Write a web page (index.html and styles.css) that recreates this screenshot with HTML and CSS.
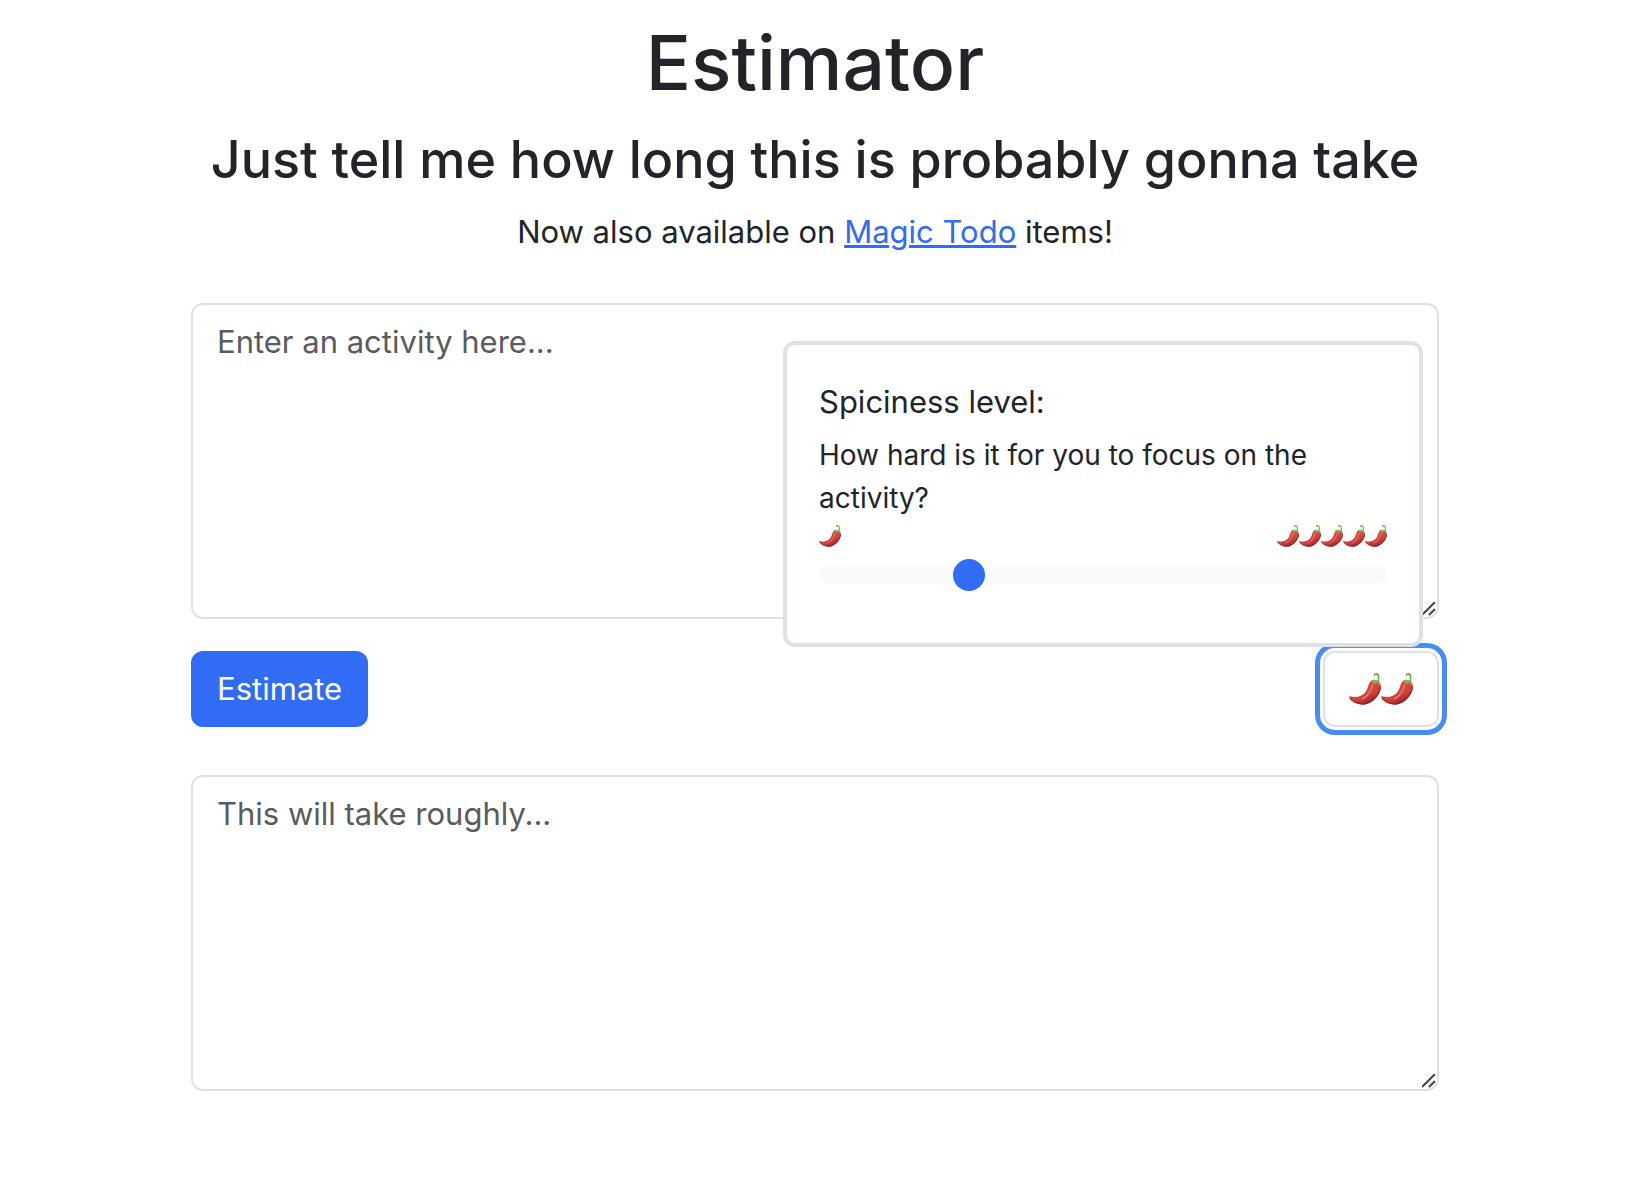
FILE: index.html
```html
<!DOCTYPE html>
<html lang="en">
<head>
<meta charset="utf-8">
<meta name="viewport" content="width=device-width, initial-scale=1">
<title>Estimator</title>
<link rel="stylesheet" href="styles.css">
</head>
<body>
<svg class="defs" width="0" height="0" aria-hidden="true">
  <defs>
    <linearGradient id="skin" x1="0.3" y1="0.2" x2="0.75" y2="1">
      <stop offset="0" stop-color="#e0504a"/>
      <stop offset="0.55" stop-color="#cf3f3b"/>
      <stop offset="1" stop-color="#8a1f1f"/>
    </linearGradient>
    <symbol id="chili" viewBox="0 0 32 32">
      <path d="M21.500 8.500C19 10.500 19.500 15 16.500 19C13 23.600 7 25.200 1.500 23.300C0 22.900-.2 24.400.8 25.600C4.200 30 11.500 33.300 18.500 30.800C27 27.800 33 18.500 31.600 12C30.800 7.800 25 5.800 21.500 8.500Z" fill="url(#skin)"/>
      <path d="M1 25.400C5 29.700 12 32.300 18.500 30C25.500 27.300 31 20.500 31.600 13.500" fill="none" stroke="#7d1717" stroke-width="1.400" opacity="0.6"/>
      <path d="M23.500 12C22.500 17 19.500 22.500 13.500 26" fill="none" stroke="#ee8f88" stroke-width="1.500" stroke-linecap="round" opacity="0.7"/>
      <path d="M20.500 9C22 7 24 6.600 26.400 6.900C29 7.100 31.400 8.500 31.900 11.800C30.300 12.500 29.600 10.600 27.900 10.100C26.500 9.700 26.300 11.400 25 10.800C23.800 10.300 24 8.800 22.500 8.600C21.700 8.500 21.200 9.200 20.500 9Z" fill="#84b35a"/>
      <path d="M28.800 9C30.200 6 30.200 1.200 27.300.9C26 .8 25.400 1.500 25.500 2.400" fill="none" stroke="#7ba34f" stroke-width="1.600" stroke-linecap="round"/>
    </symbol>
  </defs>
</svg>

<main class="container">
  <header class="intro">
    <h1 class="title">Estimator</h1>
    <h2 class="subtitle">Just tell me how long this is probably gonna take</h2>
    <p class="note">Now also available on <a class="link" href="#">Magic Todo</a> items!</p>
  </header>

  <form class="form">
    <textarea class="field" aria-label="Activity" placeholder="Enter an activity here..."></textarea>

    <div class="actions">
      <button class="btn btn-primary" type="button">Estimate</button>
      <button class="btn btn-spice" type="button" aria-label="Spiciness level 2">
        <svg class="chili"><use href="#chili"/></svg><svg class="chili"><use href="#chili"/></svg>
      </button>

      <div class="popover">
        <label class="popover-title" for="spice">Spiciness level:</label>
        <p class="popover-text">How hard is it for you to focus on the activity?</p>
        <div class="scale">
          <span class="scale-end"><svg class="chili-small"><use href="#chili"/></svg></span>
          <span class="scale-end"><svg class="chili-small"><use href="#chili"/></svg><svg class="chili-small"><use href="#chili"/></svg><svg class="chili-small"><use href="#chili"/></svg><svg class="chili-small"><use href="#chili"/></svg><svg class="chili-small"><use href="#chili"/></svg></span>
        </div>
        <input class="range" id="spice" type="range" min="1" max="5" value="2">
      </div>
    </div>

    <textarea class="field" aria-label="Estimate" placeholder="This will take roughly..."></textarea>
  </form>
</main>
</body>
</html>
```
FILE: styles.css
```css
*, *::before, *::after { box-sizing: border-box; }

body {
  margin: 0;
  padding: 15px 12px 0 0;
  background: #fff;
  color: #212529;
  font-family: Inter, "Liberation Sans", sans-serif;
  font-size: 31px;
  line-height: 48px;
}

h1, h2, p { margin: 0; }

.defs { position: absolute; }

.container {
  max-width: 1296px;
  margin: 0 auto;
  padding: 0 24px 48px;
}

.intro {
  display: flex;
  flex-direction: column;
  gap: 15px;
  margin-bottom: 47px;
  text-align: center;
}

.title {
  font-size: 75px;
  font-weight: 500;
  line-height: 96px;
}

.subtitle {
  font-size: 52px;
  font-weight: 500;
  line-height: 67px;
}

.link {
  color: #316cf4;
  text-decoration: underline;
}

.field {
  display: block;
  width: 100%;
  height: 316px;
  padding: 13px 24px;
  border: 2px solid #dee2e6;
  border-radius: 12px;
  background: #fff;
  color: inherit;
  font: inherit;
  resize: vertical;
}

.field::placeholder {
  color: #595c5f;
  opacity: 1;
}

.field::-webkit-resizer {
  background: url("data:image/svg+xml,%3Csvg xmlns='http://www.w3.org/2000/svg' width='15' height='15'%3E%3Cpath d='M0 13L13 0M7 13L13 7' stroke='%23444' stroke-width='2'/%3E%3C/svg%3E") no-repeat;
}

.actions {
  position: relative;
  display: flex;
  justify-content: space-between;
  margin: 32px 0 48px;
}

.btn {
  display: flex;
  align-items: center;
  padding: 12px 24px;
  border: 2px solid transparent;
  border-radius: 12px;
  font: inherit;
  cursor: pointer;
}

.btn-primary {
  border-color: #316cf4;
  background: #316cf4;
  color: #fff;
}

.btn-spice {
  border-color: #dee2e6;
  background: #fff;
  box-shadow: 0 0 0 3px #fff, 0 0 0 8px #468cf7;
}

.chili {
  width: 32px;
  height: 32px;
}

.popover {
  position: absolute;
  right: 16px;
  bottom: calc(100% + 4px);
  width: 640px;
  padding: 33px 32px 52px;
  border: 4px solid #dee2e6;
  border-radius: 12px;
  background: #fff;
}

.popover-title {
  display: block;
  margin-bottom: 8px;
}

.popover-text {
  font-size: 28px;
  line-height: 43px;
}

.scale {
  display: flex;
  justify-content: space-between;
  padding: 5px 0 12px;
}

.scale-end { display: flex; }

.chili-small {
  width: 22px;
  height: 22px;
}

.range {
  display: block;
  width: 100%;
  height: 32px;
  margin: 0;
  appearance: none;
  background: transparent;
}

.range::-webkit-slider-runnable-track {
  height: 16px;
  border-radius: 8px;
  background: #f8f9fa;
}

.range::-webkit-slider-thumb {
  width: 32px;
  height: 32px;
  margin-top: -8px;
  appearance: none;
  border: 0;
  border-radius: 50%;
  background: #316cf4;
}
```
